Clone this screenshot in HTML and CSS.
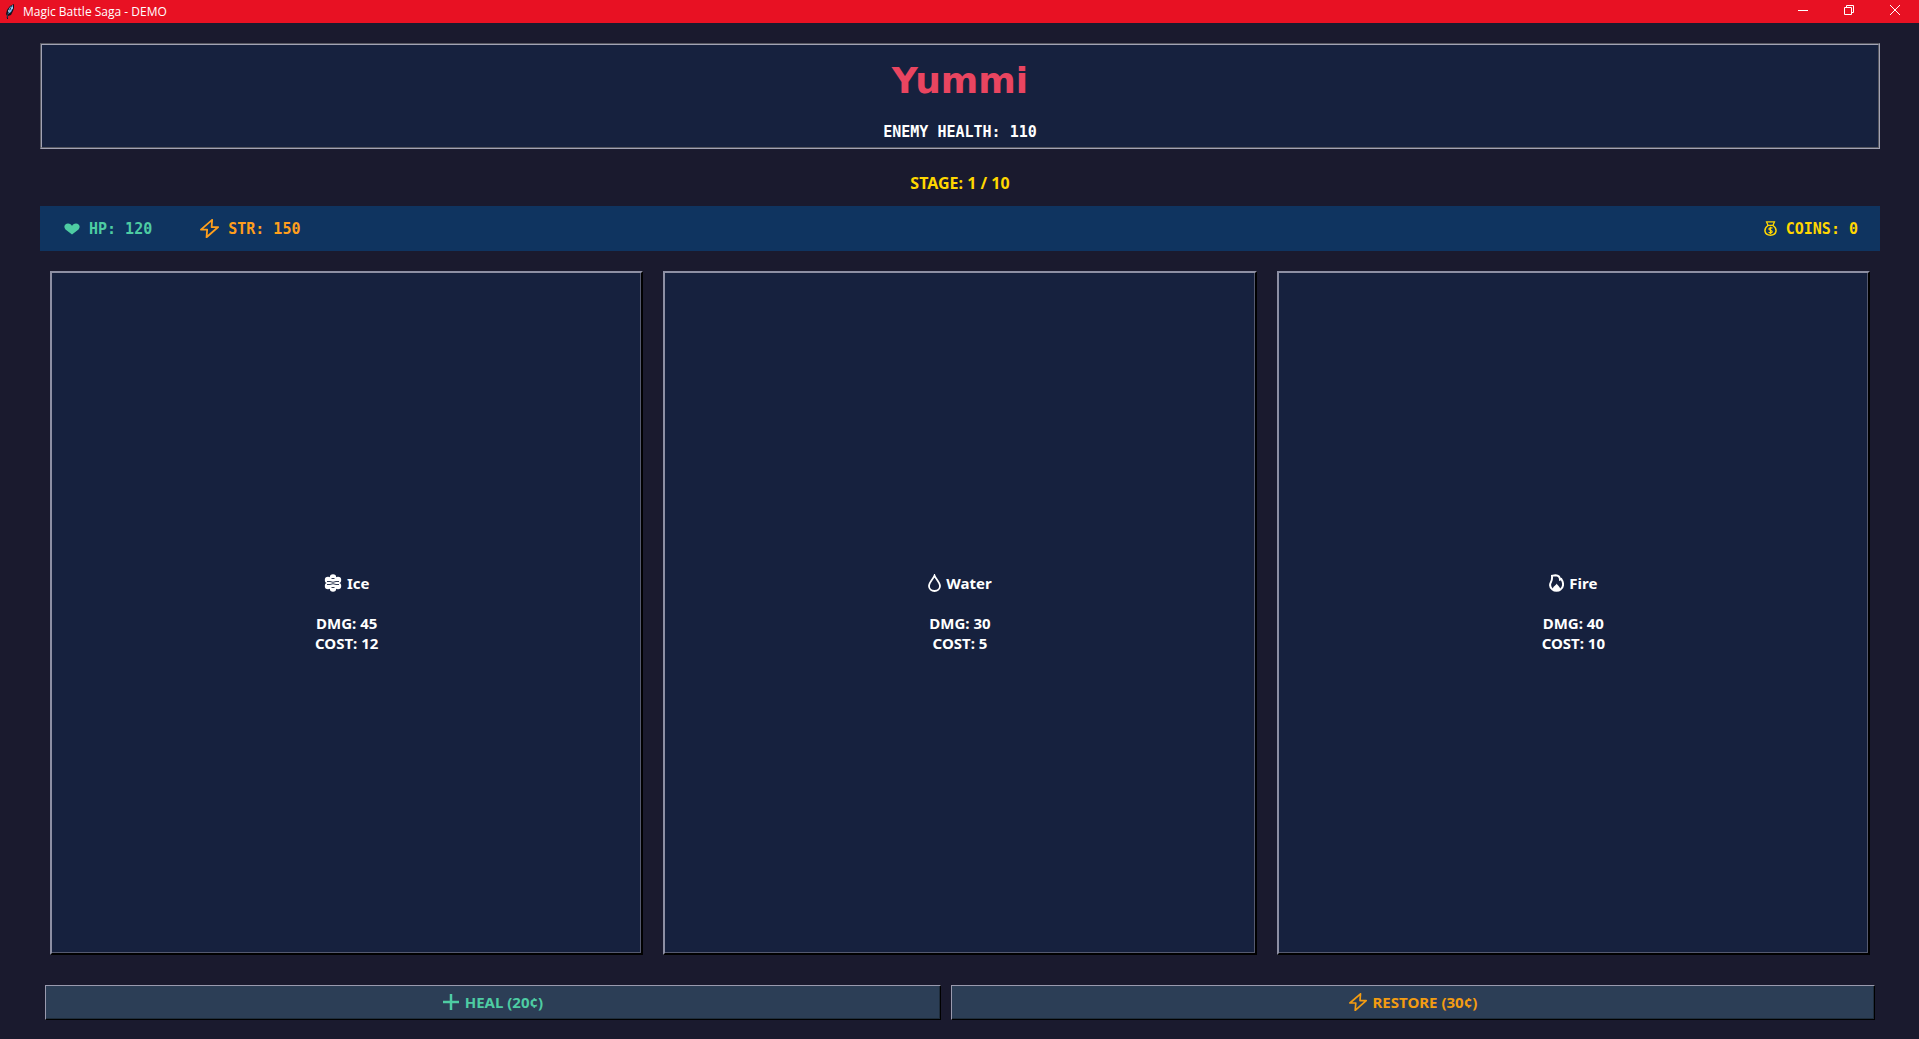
FILE: index.html
```html
<!DOCTYPE html>
<html lang="en">
<head>
  <meta charset="UTF-8" />
  <meta name="viewport" content="width=device-width, initial-scale=1.0"/>
  <title>Magic Battle Saga - DEMO</title>
  <link rel="stylesheet" href="styles.css">
</head>
<body>

  <header class="titlebar">
    <svg class="app-icon" width="10" height="16" viewBox="0 0 10 16">
      <path d="M9 0L5 2 2 6 1 10 2 12 2 15 3 15 3 12 6 11 8 7 9 4Z" fill="#10131c"/>
      <path d="M8 1L5 3 3 7 3 10 6 8 8 4Z" fill="#74b4f0"/>
      <path d="M7 2L3 9 2 14" fill="none" stroke="#27364d"/>
      <path d="M7 3L7 5M4 6L4 8" stroke="#d5eaff"/>
    </svg>
    <span class="app-title">Magic Battle Saga - DEMO</span>
    <div class="window-buttons">
      <button aria-label="Minimize">
        <svg width="10" height="10" viewBox="0 0 10 10"><path d="M0 5.5H10"/></svg>
      </button>
      <button aria-label="Restore window">
        <svg width="10" height="10" viewBox="0 0 10 10"><path d="M.5 2.5H7.5V9.5H.5ZM2.5 2.5V.5H9.5V7.5H7.5"/></svg>
      </button>
      <button aria-label="Close">
        <svg width="10" height="10" viewBox="0 0 10 10"><path d="M0 0L10 10M10 0L0 10"/></svg>
      </button>
    </div>
  </header>

  <main class="game">
    <section class="enemy">
      <h1>Yummi</h1>
      <p>ENEMY HEALTH: 110</p>
    </section>

    <div class="stage">STAGE: 1 / 10</div>

    <div class="stats">
      <div class="stat hp">
        <svg width="16" height="12" viewBox="0 0 16 12"><path d="M8 11.500L1.500 6.500C-1 3.500 1 .5 4 .5 6 .5 7.500 1.500 8 3 8.500 1.500 10 .5 12 .5 15 .5 17 3.500 14.500 6.500Z" fill="currentColor"/></svg>
        <span>HP: 120</span>
      </div>
      <div class="stat str">
        <svg class="bolt" width="19" height="19" viewBox="0 0 18 18"><path d="M11.500 .8L.9 10H6.800L6.200 17.300 17.200 7.600H11Z"/></svg>
        <span>STR: 150</span>
      </div>
      <div class="stat coins">
        <svg width="13" height="15" viewBox="0 0 13 15" fill="none" stroke="currentColor">
          <path d="M2.500 .8H10.500L9 4.300H4Z" stroke-width="1.200"/>
          <path d="M4 4.500C-.5 7.500-.2 14.200 6.500 14.200S13.500 7.500 9 4.500" stroke-width="1.500"/>
          <path d="M8.500 7.300C7 6.200 4.700 6.800 5 8.300 5.300 9.500 8.200 9 8.200 10.700 8.200 12 5.800 12.200 4.600 11.200M6.500 5.800V13" stroke-width="1.200"/>
        </svg>
        <span>COINS: 0</span>
      </div>
    </div>

    <div class="cards">
      <button class="card">
        <span class="spell">
          <svg width="18" height="18" viewBox="0 0 18 18">
            <g fill="currentColor">
              <circle cx="9" cy="3.500" r="3.200"/>
              <circle cx="9" cy="14.500" r="3.200"/>
              <circle cx="4" cy="6" r="3.200"/>
              <circle cx="14" cy="6" r="3.200"/>
              <circle cx="4" cy="12" r="3.200"/>
              <circle cx="14" cy="12" r="3.200"/>
              <circle cx="9" cy="9" r="5"/>
            </g>
            <path d="M3 7.500L6 7.500 9 8.300 12 7.500 15 7.500M3 10.500L6 10.500 9 9.700 12 10.500 15 10.500M7.500 4.500H10.500M7.500 13.500H10.500" fill="none" stroke="#16213e" stroke-width=".9"/>
          </svg>
          Ice
        </span>
        <span>DMG: 45</span>
        <span>COST: 12</span>
      </button>
      <button class="card">
        <span class="spell">
          <svg width="13" height="18" viewBox="0 0 13 18"><path d="M6.500 1.500C5.500 4.500 1 8.500 1 12 1 15 3.500 17 6.500 17S12 15 12 12C12 8.500 7.500 4.500 6.500 1.500Z" fill="none" stroke="currentColor" stroke-width="1.800"/></svg>
          Water
        </span>
        <span>DMG: 30</span>
        <span>COST: 5</span>
      </button>
      <button class="card">
        <span class="spell">
          <svg width="15" height="18" viewBox="0 0 15 18">
            <path d="M6.500 1.200C10 1.500 11 3.500 11 5.500L12.300 5C15 9 14.500 13.500 11.500 15.500 9.500 17.200 5.500 17.200 3.500 15.500 1 13.500 .6 10.500 2 8 3.500 5.500 3 3.500 3 1.800Z" fill="none" stroke="currentColor" stroke-width="2"/>
            <path d="M7.500 9.500C7.500 11.500 3.500 12 4 15.500 6 17 9 17 11 15.500 11.500 13 9.500 12.500 7.500 9.500Z" fill="currentColor"/>
          </svg>
          Fire
        </span>
        <span>DMG: 40</span>
        <span>COST: 10</span>
      </button>
    </div>

    <div class="actions">
      <button class="action heal">
        <svg width="16" height="16" viewBox="0 0 16 16"><path d="M8 0V16M0 8H16" stroke="currentColor" stroke-width="2.500"/></svg>
        HEAL (20¢)
      </button>
      <button class="action restore">
        <svg class="bolt" width="18" height="18" viewBox="0 0 18 18"><path d="M11.500 .8L.9 10H6.800L6.200 17.300 17.200 7.600H11Z"/></svg>
        RESTORE (30¢)
      </button>
    </div>
  </main>

</body>
</html>
```
FILE: styles.css
```css
* {
  box-sizing: border-box;
}
body {
  margin: 0;
  min-height: 100vh;
  display: flex;
  flex-direction: column;
  background: #1a1a2e;
  color: #ffffff;
  font-family: 'Noto Sans', sans-serif;
  font-size: 15px;
  font-weight: bold;
  line-height: 20px;
}
button {
  font: inherit;
  color: inherit;
  cursor: pointer;
}
svg {
  flex: none;
}
.titlebar {
  display: flex;
  align-items: center;
  height: 23px;
  padding-left: 5px;
  background: #e81123;
}
.app-title {
  margin-left: 8px;
  font-family: 'Open Sans', sans-serif;
  font-size: 12px;
  font-weight: normal;
}
.window-buttons {
  display: flex;
  align-self: stretch;
  margin-left: auto;
  padding-right: 1px;
}
.window-buttons button {
  width: 46px;
  padding: 0 0 3px;
  display: flex;
  align-items: center;
  justify-content: center;
  border: none;
  background: none;
}
.window-buttons path {
  fill: none;
  stroke: #ffffff;
}
.game {
  flex: 1;
  display: flex;
  flex-direction: column;
  padding: 20px 39px 19px 40px;
}
.enemy {
  border: 2px groove #a2a3b4;
  background: #16213e;
  text-align: center;
}
.enemy h1 {
  margin: 12px 0;
  font-family: 'DejaVu Sans', sans-serif;
  font-size: 36px;
  line-height: 48px;
  color: #e94560;
}
.enemy p {
  margin: 0;
  padding: 2px 0;
  font-family: 'DejaVu Sans Mono', monospace;
  line-height: 26px;
}
.stage {
  padding: 24px 0 13px;
  font-size: 16px;
  text-align: center;
  color: #ffd700;
}
.stats {
  display: flex;
  align-items: center;
  height: 45px;
  padding: 0 22px 0 24px;
  background: #0f3460;
  font-family: 'DejaVu Sans Mono', monospace;
}
.stat {
  display: flex;
  align-items: center;
  gap: 9px;
}
.hp {
  color: #4ecca3;
}
.str {
  margin-left: 48px;
  color: #ff9f1c;
}
.coins {
  margin-left: auto;
  color: #ffd700;
}
.bolt {
  fill: none;
  stroke: currentColor;
  stroke-width: 1.7;
  stroke-linejoin: round;
}
.cards {
  flex: 1;
  display: grid;
  grid-template-columns: repeat(3, 1fr);
  gap: 20px;
  padding: 20px 10px 30px;
}
.card {
  display: flex;
  flex-direction: column;
  align-items: center;
  justify-content: center;
  padding: 0;
  border: 2px solid;
  border-color: #8d8fa3 #000000 #000000 #8d8fa3;
  box-shadow: inset -1px -1px #555a70;
  background: #16213e;
}
.spell {
  display: flex;
  align-items: center;
  gap: 5px;
  margin-bottom: 20px;
}
.actions {
  display: flex;
  gap: 10px;
  padding: 0 5px;
}
.action {
  flex: 1 1 auto;
  height: 35px;
  display: flex;
  align-items: center;
  justify-content: center;
  gap: 6px;
  padding: 0 0 1px;
  border: 1px solid;
  border-color: #9a9aae #000000 #000000 #9a9aae;
  box-shadow: inset -1px -1px #1f2d3c;
  background: #2c3e56;
}
.heal {
  color: #4ecca3;
}
.restore {
  color: #f39c12;
}
```
